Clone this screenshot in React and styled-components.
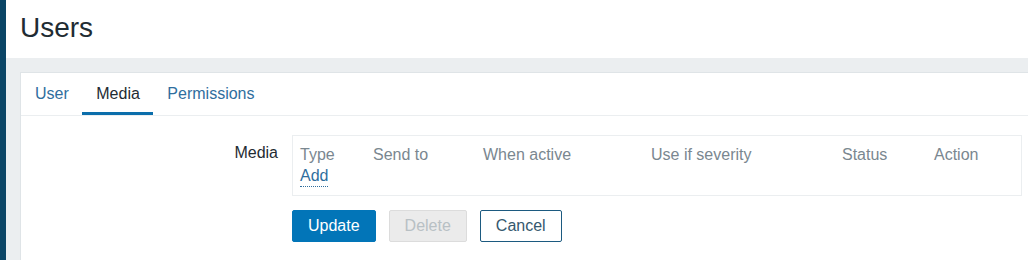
import { createGlobalStyle, styled } from "styled-components";

const GlobalStyle = createGlobalStyle`
  html, body {
    margin: 0;
    padding: 0;
    background: #ebeef0;
  }
  body {
    font-family: "Liberation Sans", Arial, sans-serif;
    font-size: 16px;
    color: #1f2c33;
  }
`;

const Layout = styled.div`
  display: flex;
  min-height: 260px;
  height: 260px;
  overflow: hidden;
`;

const Sidebar = styled.aside`
  width: 6px;
  flex: none;
  background: #0b4566;
`;

const Main = styled.main`
  flex: 1;
  display: flex;
  flex-direction: column;
  background: #ebeef0;
`;

const Header = styled.header`
  height: 58px;
  background: #fff;
  padding: 0 14px;
  display: flex;
  align-items: center;
`;

const Title = styled.h1`
  margin: 0 0 2px;
  font-size: 28px;
  font-weight: normal;
  color: #1f2c33;
`;

const Content = styled.div`
  flex: 1;
  padding: 14px 0 0 14px;
`;

const Card = styled.section`
  height: 100%;
  background: #fff;
  border: 1px solid #dfe4e7;
  border-right: none;
  border-bottom: none;
`;

const Tabs = styled.nav`
  display: flex;
  height: 42px;
  border-bottom: 1px solid #ebeef0;
`;

const Tab = styled.a`
  position: relative;
  display: flex;
  align-items: center;
  padding: 0 13.5px 0 14px;
  color: ${(p) => (p.$active ? "#1f2c33" : "#2f6e9e")};
  text-decoration: none;

  &::after {
    content: "";
    display: ${(p) => (p.$active ? "block" : "none")};
    position: absolute;
    left: 0;
    right: 0;
    bottom: 0;
    height: 3px;
    background: #0b6eab;
  }
`;

const Form = styled.div`
  display: grid;
  grid-template-columns: 257px 1fr;
  column-gap: 14px;
  row-gap: 14px;
  padding: 19px 6px 0 0;
`;

const Label = styled.label`
  text-align: right;
  padding-top: 7px;
  line-height: 22px;
  color: #1f2c33;
`;

const MediaBox = styled.div`
  border: 1px solid #ebeef0;
  padding: 8px 7px 7px;
`;

const Row = styled.div`
  display: grid;
  grid-template-columns: 73px 110px 168px 191px 92px 1fr;
  height: 22px;
  line-height: 22px;
`;

const HeadCell = styled.span`
  color: #7a8790;
`;

const AddLink = styled.a`
  color: #2f6e9e;
  text-decoration: none;
  border-bottom: 1px dotted #2f6e9e;
  line-height: 20px;
  align-self: start;
  justify-self: start;
`;

const Actions = styled.div`
  grid-column: 2;
  display: flex;
  gap: 13px;
`;

const variants = {
  primary: "background:#0275b8;border-color:#0275b8;color:#fff;",
  disabled: "background:#ebebeb;border-color:#dcdcdc;color:#b8c0c4;",
  alt: "background:#fff;border-color:#1c5a80;color:#35586e;",
};

const Button = styled.button`
  height: 32px;
  padding: 0 15px;
  border: 1px solid;
  border-radius: 2px;
  font: inherit;
  font-size: 16px;
  ${(p) => variants[p.$variant]}
`;

const columns = [
  "Type",
  "Send to",
  "When active",
  "Use if severity",
  "Status",
  "Action",
];

export default function App() {
  return (
    <>
      <GlobalStyle />
      <Layout>
        <Sidebar />
        <Main>
          <Header>
            <Title>Users</Title>
          </Header>
          <Content>
            <Card>
              <Tabs>
                <Tab>User</Tab>
                <Tab $active>Media</Tab>
                <Tab>Permissions</Tab>
              </Tabs>
              <Form>
                <Label>Media</Label>
                <MediaBox>
                  <Row>
                    {columns.map((c) => (
                      <HeadCell key={c}>{c}</HeadCell>
                    ))}
                  </Row>
                  <Row>
                    <AddLink>Add</AddLink>
                  </Row>
                </MediaBox>
                <Actions>
                  <Button $variant="primary">Update</Button>
                  <Button $variant="disabled" disabled>
                    Delete
                  </Button>
                  <Button $variant="alt">Cancel</Button>
                </Actions>
              </Form>
            </Card>
          </Content>
        </Main>
      </Layout>
    </>
  );
}
